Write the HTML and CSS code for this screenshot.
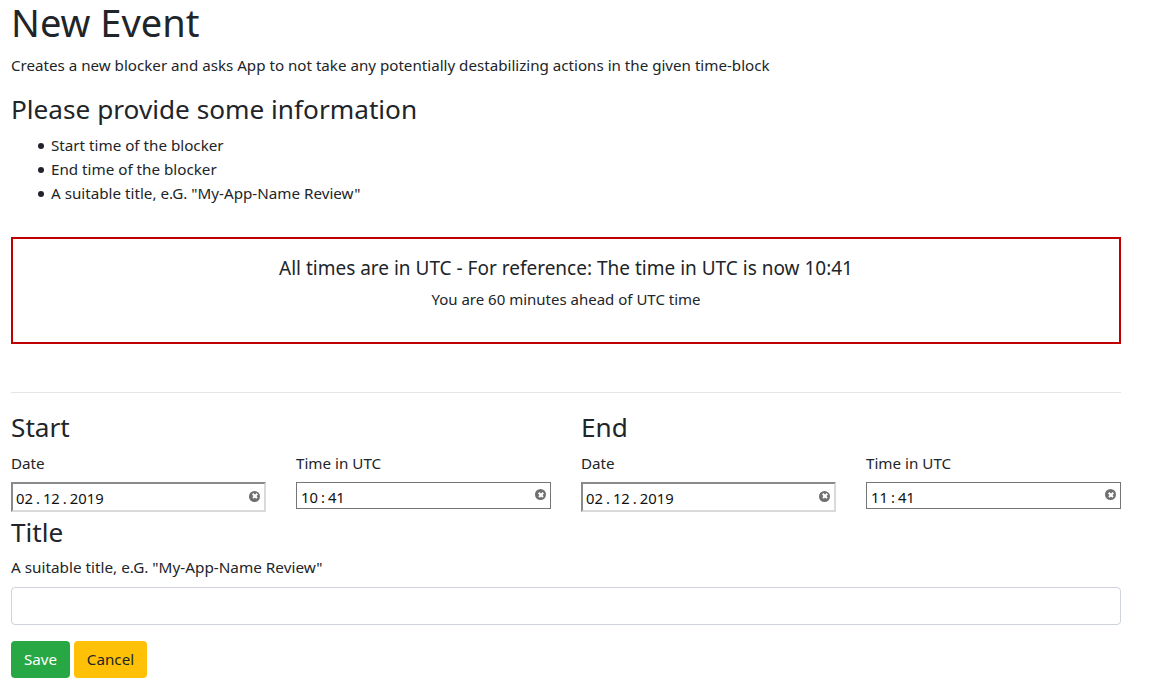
FILE: index.html
```html
<!DOCTYPE html>
<html>
<head>
<meta charset="utf-8">
<title>New Event</title>
<link rel="stylesheet" href="styles.css">
</head>
<body>
<div class="container">
  <h1 class="title">New Event</h1>
  <p class="desc">Creates a new blocker and asks App to not take any potentially destabilizing actions in the given time-block</p>
  <h3 class="info-head">Please provide some information</h3>
  <ul class="info-list">
    <li>Start time of the blocker</li>
    <li>End time of the blocker</li>
    <li>A suitable title, e.G. "My-App-Name Review"</li>
  </ul>
  <div class="alert">
    <div class="alert-head">All times are in UTC - For reference: The time in UTC is now 10:41</div>
    <div class="alert-sub">You are 60 minutes ahead of UTC time</div>
  </div>
  <hr class="divider">
  <div class="range-row">
    <div class="half">
      <h3 class="sec-head">Start</h3>
      <div class="pair">
        <div class="field">
          <div class="lbl">Date</div>
          <div class="inp inp-date"><span class="val">02<span class="sep">.</span>12<span class="sep">.</span>2019</span><span class="clr"></span></div>
        </div>
        <div class="field">
          <div class="lbl">Time in UTC</div>
          <div class="inp inp-time"><span class="val">10<span class="sep">:</span>41</span><span class="clr"></span></div>
        </div>
      </div>
    </div>
    <div class="half">
      <h3 class="sec-head">End</h3>
      <div class="pair">
        <div class="field">
          <div class="lbl">Date</div>
          <div class="inp inp-date"><span class="val">02<span class="sep">.</span>12<span class="sep">.</span>2019</span><span class="clr"></span></div>
        </div>
        <div class="field">
          <div class="lbl">Time in UTC</div>
          <div class="inp inp-time"><span class="val">11<span class="sep">:</span>41</span><span class="clr"></span></div>
        </div>
      </div>
    </div>
  </div>
  <h3 class="title-head">Title</h3>
  <div class="lbl title-lbl">A suitable title, e.G. "My-App-Name Review"</div>
  <div class="text-input"></div>
  <div class="actions">
    <button class="btn btn-save">Save</button>
    <button class="btn btn-cancel">Cancel</button>
  </div>
</div>
</body>
</html>
```
FILE: styles.css
```css
html, body {
  margin: 0;
  padding: 0;
  background: #fff;
}
body {
  font-family: "Noto Sans", "Open Sans", sans-serif;
  color: #212529;
  font-size: 15px;
}
.container {
  width: 1110px;
  margin-left: 11px;
}
.title {
  font-size: 38px;
  font-weight: 400;
  line-height: 44px;
  margin: 0;
}
.desc {
  font-size: 15.15px;
  line-height: 22px;
  margin: 10px 0 0;
}
.info-head {
  font-size: 26.2px;
  font-weight: 400;
  line-height: 34px;
  margin: 16px 0 0;
}
.info-list {
  margin: 7px 0 0;
  padding-left: 40px;
  list-style: none;
}
.info-list li {
  position: relative;
  line-height: 24px;
  font-size: 15.2px;
}
.info-list li::before {
  content: "";
  position: absolute;
  left: -13px;
  top: 10px;
  width: 6px;
  height: 6px;
  border-radius: 50%;
  background: #212529;
}
.alert {
  margin-top: 32px;
  border: 2px solid #c00000;
  padding: 17px 0 32px;
  text-align: center;
}
.alert-head {
  font-size: 19px;
  line-height: 24px;
}
.alert-sub {
  margin-top: 8px;
  font-size: 15px;
  line-height: 22px;
}
.divider {
  margin: 48px 0 0;
  border: 0;
  border-top: 1px solid #e5e5e5;
  height: 0;
}
.range-row {
  display: flex;
  gap: 30px;
}
.half {
  flex: 1;
}
.sec-head, .title-head {
  font-size: 26.2px;
  font-weight: 400;
  line-height: 34px;
  margin: 17px 0 0;
}
.title-head {
  margin-top: 3px;
}
.pair {
  display: grid;
  grid-template-columns: 1fr 1fr;
  gap: 30px;
}
.lbl {
  font-size: 15.2px;
  line-height: 22px;
  margin-top: 8px;
}
.inp {
  margin-top: 8px;
  box-sizing: border-box;
  display: flex;
  align-items: center;
  justify-content: space-between;
  padding: 0 4px 0 3px;
  font-size: 14.8px;
  color: #111;
  background: #fff;
}
.inp-date {
  height: 30px;
  border: 2px solid;
  border-color: #8a8a8a #d9d9d9 #d9d9d9 #8a8a8a;
}
.inp-time {
  height: 27px;
  border: 1px solid #767676;
  padding-left: 4px;
  padding-right: 4px;
}
.val {
  padding-top: 2px;
}
.sep {
  margin: 0 3px;
}
.clr {
  width: 11px;
  height: 11px;
  border-radius: 50%;
  background: #707070;
  position: relative;
  margin-top: -2px;
}
.clr::before, .clr::after {
  content: "";
  position: absolute;
  left: 2.5px;
  top: 4.7px;
  width: 6px;
  height: 1.6px;
  background: #fff;
  transform: rotate(45deg);
}
.clr::after {
  transform: rotate(-45deg);
}
.title-lbl {
  margin-top: 7px;
  font-size: 15.3px;
}
.text-input {
  margin-top: 9px;
  height: 38px;
  box-sizing: border-box;
  border: 1px solid #ced4da;
  border-radius: 4px;
}
.actions {
  margin-top: 16px;
  display: flex;
  gap: 4px;
}
.btn {
  font-family: inherit;
  font-size: 15.2px;
  height: 37px;
  padding: 0 6px;
  border: 1px solid transparent;
  border-radius: 4px;
  line-height: 1;
}
.btn-save {
  background: #28a745;
  color: #fff;
  width: 59px;
}
.btn-cancel {
  background: #ffc107;
  color: #212529;
  width: 73px;
}
```
